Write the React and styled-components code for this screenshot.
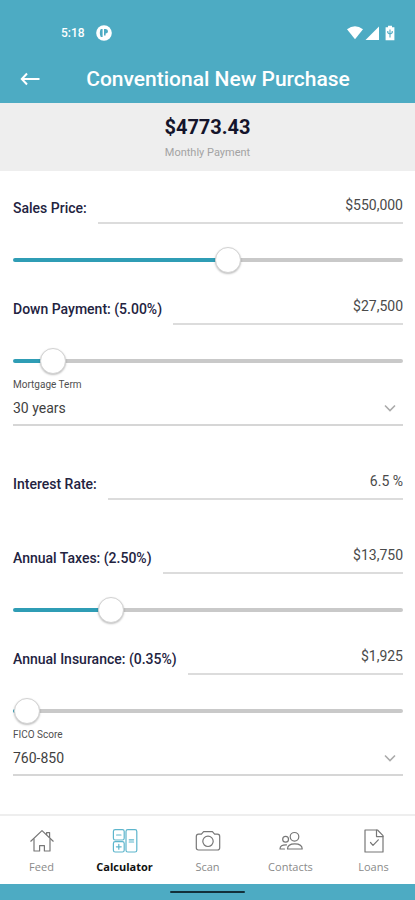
import React, { useState } from 'react';
import styled, { createGlobalStyle } from 'styled-components';

const GlobalStyle = createGlobalStyle`
    *, *::before, *::after {
        box-sizing: border-box;
    }

    body {
        margin: 0;
        background: #FFFFFF;
        font-family: Roboto, "Liberation Sans", sans-serif;
    }
`;

const Page = styled.div`
    display: flex;
    flex-direction: column;
    min-height: 100vh;
    background: #FFFFFF;
`;

const Header = styled.header`
    background: #4DABC3;
    color: #FFFFFF;
    padding-top: 20px;
`;

const StatusBar = styled.div`
    display: flex;
    align-items: center;
    height: 26px;
    padding: 0 18px 0 61px;
    font-size: 12px;
    font-weight: 500;
    line-height: 16px;
`;

const StatusIcons = styled.div`
    display: flex;
    align-items: center;
    gap: 2px;
    margin-left: auto;
`;

const AppBadge = styled.svg`
    margin-left: 11px;
`;

const TitleBar = styled.div`
    display: flex;
    align-items: center;
    height: 57px;
    padding: 8px 26px 0 13px;
`;

const BackButton = styled.button`
    display: flex;
    align-items: center;
    justify-content: center;
    width: 34px;
    height: 34px;
    padding: 0;
    border: 0;
    background: none;
    color: inherit;
    cursor: pointer;
`;

const Title = styled.h1`
    flex: 1;
    margin: 0;
    font-size: 21px;
    font-weight: 500;
    line-height: 28px;
    text-align: center;
    white-space: nowrap;
`;

const Summary = styled.section`
    display: flex;
    flex-direction: column;
    align-items: center;
    gap: 6px;
    padding: 12px 0 11px;
    background: #EEEEEE;
`;

const Amount = styled.div`
    color: #14142B;
    font-size: 20px;
    font-weight: 700;
    line-height: 24px;
`;

const AmountLabel = styled.div`
    color: #A3A3A3;
    font-size: 11px;
    line-height: 15px;
`;

const Form = styled.form`
    display: flex;
    flex-direction: column;
    gap: 36px;
    padding: 15px 12px 38px 13px;
`;

const Group = styled.div`
    display: flex;
    flex-direction: column;
`;

const FieldRow = styled.div`
    display: flex;
    gap: 11px;
    height: 38px;
`;

const FieldLabel = styled.label`
    padding-top: 12px;
    color: #23233F;
    font-size: 14px;
    font-weight: 500;
    line-height: 20px;
    white-space: nowrap;
`;

const FieldInput = styled.input`
    flex: 1;
    min-width: 0;
    padding: 2px 0 0;
    border: 0;
    border-bottom: 2px solid #DCDCDC;
    border-radius: 0;
    outline: none;
    background: none;
    color: #4A4A4A;
    font-family: inherit;
    font-size: 14px;
    text-align: right;
`;

const Range = styled.input`
    appearance: none;
    display: block;
    width: 100%;
    height: 26px;
    margin: 23px 0 14px;
    background: none;
    cursor: pointer;

    &::-webkit-slider-runnable-track {
        height: 4px;
        border-radius: 2px;
        background: linear-gradient(to right, #2F9DB5 var(--fill), #C9C9C9 var(--fill));
    }

    &::-webkit-slider-thumb {
        appearance: none;
        width: 26px;
        height: 26px;
        margin-top: -11px;
        border: 1px solid #D2D2D2;
        border-radius: 50%;
        background: #FFFFFF;
        box-shadow: 0 1px 2px rgba(0, 0, 0, 0.25);
    }
`;

const SelectField = styled.div`
    display: flex;
    flex-direction: column;
    margin-top: -10px;
`;

const SelectLabel = styled.label`
    color: #4F4F4F;
    font-size: 10px;
    line-height: 13px;
`;

const SelectBox = styled.div`
    display: flex;
    align-items: center;
    height: 35px;
    padding-right: 6px;
    border-bottom: 2px solid #D6D6D6;
    color: #ABABAB;
`;

const Select = styled.select`
    appearance: none;
    flex: 1;
    min-width: 0;
    padding: 0;
    border: 0;
    outline: none;
    background: none;
    color: #3F3F3F;
    font-family: inherit;
    font-size: 14px;
`;

const Nav = styled.nav`
    display: grid;
    grid-template-columns: repeat(5, 1fr);
    margin-top: auto;
    padding: 11px 0 8px;
    border-top: 2px solid #EEEEEE;
`;

const NavItem = styled.a`
    display: flex;
    flex-direction: column;
    align-items: center;
    gap: 3px;
    color: ${(props) => (props.$active ? '#111111' : '#8A8A8A')};
    font-family: "Open Sans", "Noto Sans", sans-serif;
    font-size: 11px;
    font-weight: ${(props) => (props.$active ? 700 : 400)};
    line-height: 18px;
    text-decoration: none;

    svg {
        color: ${(props) => (props.$active ? '#5DB5CC' : '#777777')};
    }
`;

const BottomBar = styled.div`
    display: flex;
    align-items: center;
    justify-content: center;
    height: 16px;
    background: #4DABC3;
`;

const HomeIndicator = styled.div`
    width: 18%;
    height: 2px;
    border-radius: 1px;
    background: #12303A;
`;

const Icon = ({ children }) => (
    <svg width="28" height="28" viewBox="0 0 28 28" fill="none" stroke="currentColor" strokeWidth="1.2" strokeLinecap="round" strokeLinejoin="round" aria-hidden="true">
        {children}
    </svg>
);

const HomeIcon = () => (
    <Icon>
        <path d="M2.8 14.2 L14 3.6 L25.2 14.2" />
        <path d="M6 12.2 V24 H11.6 V18.6 H16.4 V24 H22 V12.2" />
        <path d="M18.6 7.6 V5.6 H21.6 V10.4" />
    </Icon>
);

const CalculatorIcon = () => (
    <Icon>
        <rect x="2.4" y="2.6" width="10.8" height="10.4" rx="1.8" />
        <rect x="2.4" y="14.6" width="10.8" height="10.4" rx="1.8" />
        <rect x="15" y="2.6" width="10.8" height="22.4" rx="1.8" />
        <path d="M5.6 8 H10 M5.4 19.8 H10.2 M7.8 17.4 V22.2 M18.2 12.8 H22.6 M18.2 15 H22.6" />
    </Icon>
);

const CameraIcon = () => (
    <Icon>
        <path d="M4.5 7.2 H7.4 L9.6 4.6 H18.4 L20.6 7.2 H23.5 Q25.7 7.2 25.7 9.4 V20.8 Q25.7 23 23.5 23 H4.5 Q2.3 23 2.3 20.8 V9.4 Q2.3 7.2 4.5 7.2 Z" />
        <circle cx="14" cy="14.3" r="5.2" />
    </Icon>
);

const ContactsIcon = () => (
    <Icon>
        <circle cx="17.5" cy="9.8" r="4.3" />
        <circle cx="8.6" cy="12.2" r="2.9" />
        <path d="M10.5 22 Q10.5 16.8 17.8 16.8 Q25.2 16.8 25.2 22 Z" />
        <path d="M9.5 17.8 Q3 17.6 3 22 H7.5" />
    </Icon>
);

const LoansIcon = () => (
    <Icon>
        <path d="M5 3 H17.5 L23 8.6 V25 H5 Z" />
        <path d="M16.5 3 V9.6 H23" />
        <path d="M10.5 15.5 L13 18.3 L18.3 12.8" />
    </Icon>
);

const tabs = [
    { name: 'Feed', icon: HomeIcon },
    { name: 'Calculator', icon: CalculatorIcon },
    { name: 'Scan', icon: CameraIcon },
    { name: 'Contacts', icon: ContactsIcon },
    { name: 'Loans', icon: LoansIcon },
];

const dollars = (value) => `$${value.toLocaleString('en-US')}`;

const percentOf = (value, total) => `(${((value / total) * 100).toFixed(2)}%)`;

function SliderField({ id, label, value, onChange, min, max, step }) {
    const ratio = (value - min) / (max - min);

    const handleText = (e) => {
        onChange(Number(e.target.value.replace(/\D/g, '')));
    };

    return (
        <>
            <FieldRow>
                <FieldLabel htmlFor={id}>{label}</FieldLabel>
                <FieldInput id={id} type="text" value={dollars(value)} onChange={handleText} />
            </FieldRow>
            <Range
                type="range"
                aria-label={label}
                min={min}
                max={max}
                step={step}
                value={value}
                onChange={(e) => onChange(Number(e.target.value))}
                style={{ '--fill': `calc(13px + (100% - 26px) * ${ratio})` }}
            />
        </>
    );
}

function SelectRow({ id, label, options }) {
    return (
        <SelectField>
            <SelectLabel htmlFor={id}>{label}</SelectLabel>
            <SelectBox>
                <Select id={id} defaultValue={options[0]}>
                    {options.map((option) => (
                        <option key={option}>{option}</option>
                    ))}
                </Select>
                <svg width="14" height="14" viewBox="0 0 14 14" fill="none" stroke="currentColor" strokeWidth="1.6" aria-hidden="true">
                    <path d="M2 4.5 L7 9.5 L12 4.5" />
                </svg>
            </SelectBox>
        </SelectField>
    );
}

function App() {
    const [price, setPrice] = useState(550000);
    const [down, setDown] = useState(27500);
    const [rate, setRate] = useState('6.5 %');
    const [taxes, setTaxes] = useState(13750);
    const [insurance, setInsurance] = useState(1925);

    return (
        <Page>
            <GlobalStyle />
            <Header>
                <StatusBar>
                    5:18
                    <AppBadge width="16" height="16" viewBox="0 0 16 16" aria-hidden="true">
                        <circle cx="8" cy="8" r="7.8" fill="#FFFFFF" />
                        <path d="M4.8 4 H6.6 V12 H4.8 Q3.8 10.2 3.8 8 Q3.8 5.6 4.8 4 Z M8 4 H9.8 Q12 4.2 12 6.2 Q12 8.4 9.6 8.4 V10.4 H8 Z" fill="#4DABC3" />
                    </AppBadge>
                    <StatusIcons>
                        <svg width="16" height="14" viewBox="0 0 16 14" fill="#FFFFFF" aria-hidden="true">
                            <path d="M0 3.2 Q8 -2.8 16 3.2 L8 13.2 Z" />
                        </svg>
                        <svg width="14" height="14" viewBox="0 0 14 14" fill="#FFFFFF" aria-hidden="true">
                            <path d="M14 0.5 V14 H0.5 Z" />
                        </svg>
                        <svg width="16" height="16" viewBox="0 0 16 16" aria-hidden="true">
                            <path d="M7 2.2 V0.8 H11 V2.2 H13.4 V15.2 H4.6 V2.2 Z" fill="#FFFFFF" />
                            <path d="M9 4.5 V12.5 M6.8 6 V7.8 L9 9.4 L11.2 7.8 V6" fill="none" stroke="#4DABC3" strokeWidth="1.1" />
                        </svg>
                    </StatusIcons>
                </StatusBar>
                <TitleBar>
                    <BackButton type="button" aria-label="Back">
                        <svg width="20" height="14" viewBox="0 0 20 14" fill="none" stroke="currentColor" strokeWidth="2" aria-hidden="true">
                            <path d="M7 1.5 L1.8 7 L7 12.5 M1.8 7 H19.5" />
                        </svg>
                    </BackButton>
                    <Title>Conventional New Purchase</Title>
                </TitleBar>
            </Header>

            <Summary>
                <Amount>$4773.43</Amount>
                <AmountLabel>Monthly Payment</AmountLabel>
            </Summary>

            <Form onSubmit={(e) => e.preventDefault()}>
                <Group>
                    <SliderField id="price" label="Sales Price:" value={price} onChange={setPrice} min={50000} max={950000} step={5000} />
                    <SliderField id="down" label={`Down Payment: ${percentOf(down, price)}`} value={down} onChange={setDown} min={0} max={370000} step={500} />
                    <SelectRow id="term" label="Mortgage Term" options={['30 years', '20 years', '15 years', '10 years']} />
                </Group>

                <FieldRow>
                    <FieldLabel htmlFor="rate">Interest Rate:</FieldLabel>
                    <FieldInput id="rate" type="text" value={rate} onChange={(e) => setRate(e.target.value)} />
                </FieldRow>

                <Group>
                    <SliderField id="taxes" label={`Annual Taxes: ${percentOf(taxes, price)}`} value={taxes} onChange={setTaxes} min={0} max={58800} step={50} />
                    <SliderField id="insurance" label={`Annual Insurance: ${percentOf(insurance, price)}`} value={insurance} onChange={setInsurance} min={1650} max={110000} step={25} />
                    <SelectRow id="fico" label="FICO Score" options={['760-850', '700-759', '660-699', '620-659']} />
                </Group>
            </Form>

            {/* bottom tabs */}
            <Nav>
                {tabs.map(({ name, icon: TabIcon }) => (
                    <NavItem key={name} href={`#${name.toLowerCase()}`} $active={name === 'Calculator'}>
                        <TabIcon />
                        {name}
                    </NavItem>
                ))}
            </Nav>
            <BottomBar>
                <HomeIndicator />
            </BottomBar>
        </Page>
    );
}

export default App;
